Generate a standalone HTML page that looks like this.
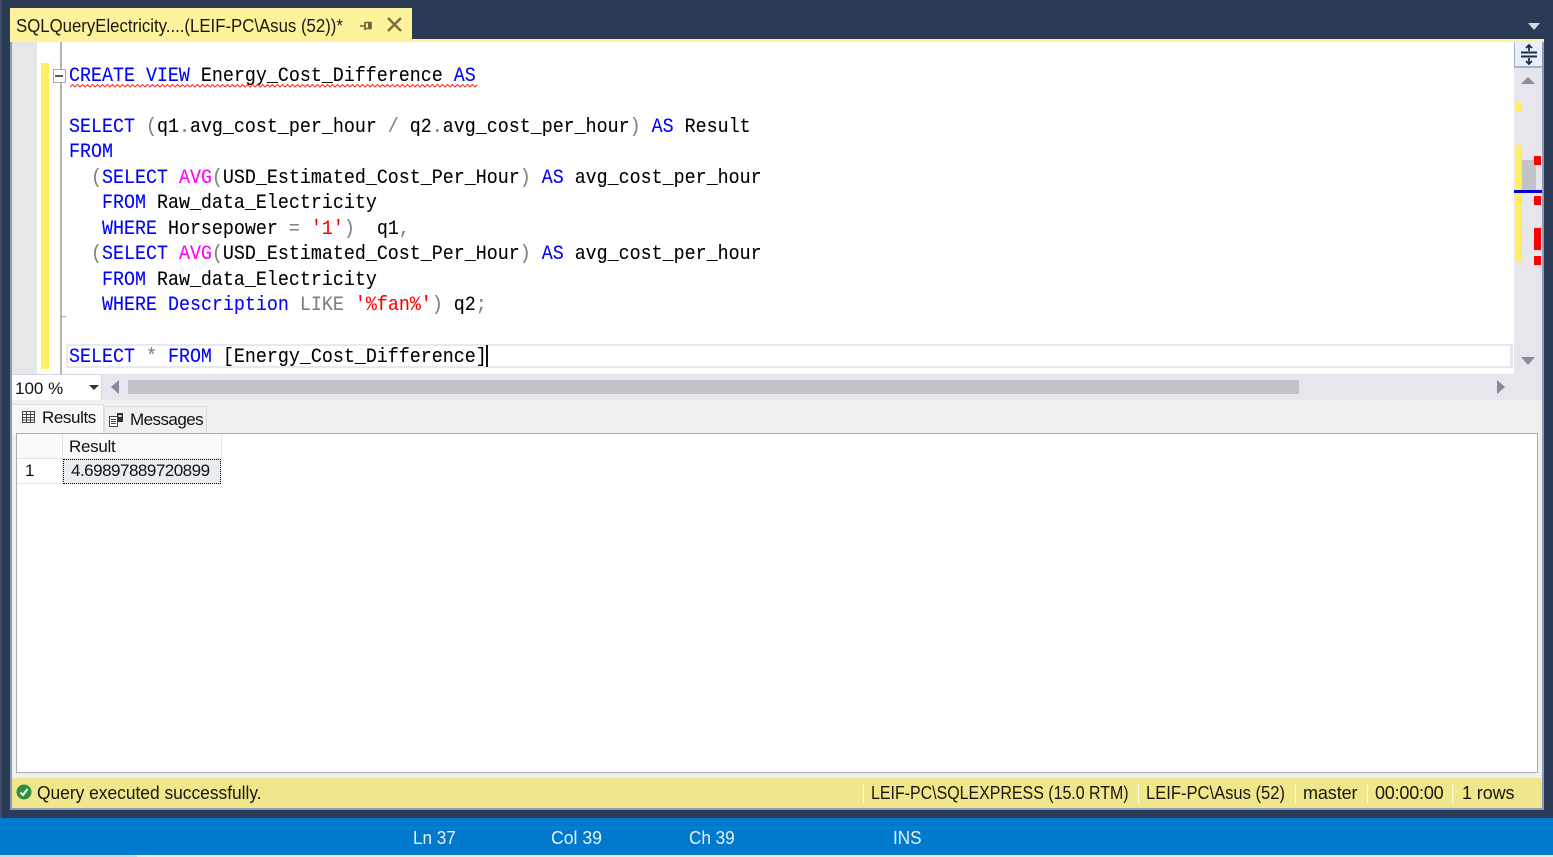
<!DOCTYPE html>
<html><head><meta charset="utf-8">
<style>
html,body{margin:0;padding:0;width:1553px;height:857px;overflow:hidden;background:#2b3a55}
div,span.a{position:absolute}
.t{font-family:"Liberation Sans",sans-serif;white-space:nowrap;color:#111}
.c{position:absolute;left:69px;font-family:"Liberation Mono",monospace;font-size:20.5px;line-height:25px;height:25px;white-space:pre;color:#000;-webkit-text-stroke:.1px currentColor;transform-origin:0 0;transform:scaleX(.8935)}
.k{color:#0000ff}.g{color:#808080}.m{color:#ff00ff}.r{color:#ff0000}
.s{position:absolute;top:782px;font-family:"Liberation Sans",sans-serif;font-size:18px;line-height:22px;white-space:nowrap;color:#1a1a0a;transform-origin:0 50%}
.sep{position:absolute;top:783px;width:1px;height:21px;background:#fbf8dc}
.b{position:absolute;top:827px;font-family:"Liberation Sans",sans-serif;font-size:18px;line-height:22px;color:#e6f2fb;white-space:nowrap;transform-origin:0 50%;transform:scaleX(.95)}
</style></head><body>
<div style="left:0;top:0;width:2px;height:818px;background:#3d4c6b"></div>
<!-- outer frame -->
<div style="left:10px;top:39px;width:1534px;height:771px;background:#8f9bb8"></div>
<div style="left:12px;top:42px;width:1530px;height:766px;background:#f0f0f3"></div>
<!-- tab -->
<div style="left:10px;top:8px;width:402px;height:34px;background:#fff29d"></div>
<div style="left:10px;top:39px;width:1534px;height:3px;background:#fff29d"></div>
<div class="t" style="left:16px;top:14px;font-size:18px;line-height:24px;color:#1a1a0a;transform-origin:0 50%;transform:scaleX(.932)">SQLQueryElectricity....(LEIF-PC\Asus (52))*</div>
<svg style="position:absolute;left:359px;top:19px" width="15" height="14"><path d="M1 7H6M6 3V11M6 3.5H12V9.5H6" fill="none" stroke="#6e6236" stroke-width="1.6"/><rect x="9" y="3" width="3" height="7" fill="#6e6236"/></svg>
<svg style="position:absolute;left:386px;top:16px" width="18" height="17"><path d="M2 2L15 15M15 2L2 15" stroke="#7a6e44" stroke-width="2.4" fill="none"/></svg>
<svg style="position:absolute;left:1527px;top:23px" width="14" height="8"><path d="M1 0H13L7 7Z" fill="#d5d9e2"/></svg>
<!-- editor -->
<div style="left:12px;top:42px;width:25px;height:332px;background:#e6e7e8"></div>
<div style="left:37px;top:42px;width:1477px;height:332px;background:#fff"></div>
<div style="left:41px;top:63px;width:8px;height:306px;background:#ffee62"></div>
<div style="left:60px;top:42px;width:1.5px;height:332px;background:#b4b4b4"></div>
<div style="left:60px;top:316px;width:6px;height:1px;background:#a8a8a8"></div>
<div style="left:53px;top:69px;width:11px;height:12px;background:#fff;border:1px solid #a8a8a8"></div>
<div style="left:55px;top:75px;width:8px;height:1.5px;background:#555"></div>
<div style="left:66px;top:344px;width:1442px;height:20px;border:2px solid #e8e8f2;border-right-width:3px"></div>
<div style="left:486px;top:345px;width:2px;height:22px;background:#111"></div>
<div class="c" style="top:64px"><span class="k">CREATE VIEW</span> Energy_Cost_Difference <span class="k">AS</span></div>
<svg style="position:absolute;left:70px;top:83px" width="410" height="6"><path d="M0 4L2.5 1.5L5 4L7.5 1.5L10 4L12.5 1.5L15 4L17.5 1.5L20 4L22.5 1.5L25 4L27.5 1.5L30 4L32.5 1.5L35 4L37.5 1.5L40 4L42.5 1.5L45 4L47.5 1.5L50 4L52.5 1.5L55 4L57.5 1.5L60 4L62.5 1.5L65 4L67.5 1.5L70 4L72.5 1.5L75 4L77.5 1.5L80 4L82.5 1.5L85 4L87.5 1.5L90 4L92.5 1.5L95 4L97.5 1.5L100 4L102.5 1.5L105 4L107.5 1.5L110 4L112.5 1.5L115 4L117.5 1.5L120 4L122.5 1.5L125 4L127.5 1.5L130 4L132.5 1.5L135 4L137.5 1.5L140 4L142.5 1.5L145 4L147.5 1.5L150 4L152.5 1.5L155 4L157.5 1.5L160 4L162.5 1.5L165 4L167.5 1.5L170 4L172.5 1.5L175 4L177.5 1.5L180 4L182.5 1.5L185 4L187.5 1.5L190 4L192.5 1.5L195 4L197.5 1.5L200 4L202.5 1.5L205 4L207.5 1.5L210 4L212.5 1.5L215 4L217.5 1.5L220 4L222.5 1.5L225 4L227.5 1.5L230 4L232.5 1.5L235 4L237.5 1.5L240 4L242.5 1.5L245 4L247.5 1.5L250 4L252.5 1.5L255 4L257.5 1.5L260 4L262.5 1.5L265 4L267.5 1.5L270 4L272.5 1.5L275 4L277.5 1.5L280 4L282.5 1.5L285 4L287.5 1.5L290 4L292.5 1.5L295 4L297.5 1.5L300 4L302.5 1.5L305 4L307.5 1.5L310 4L312.5 1.5L315 4L317.5 1.5L320 4L322.5 1.5L325 4L327.5 1.5L330 4L332.5 1.5L335 4L337.5 1.5L340 4L342.5 1.5L345 4L347.5 1.5L350 4L352.5 1.5L355 4L357.5 1.5L360 4L362.5 1.5L365 4L367.5 1.5L370 4L372.5 1.5L375 4L377.5 1.5L380 4L382.5 1.5L385 4L387.5 1.5L390 4L392.5 1.5L395 4L397.5 1.5L400 4L402.5 1.5L405 4L407.5 1.5" fill="none" stroke="#ff3030" stroke-width="1.1"/></svg>
<div class="c" style="top:115px"><span class="k">SELECT</span> <span class="g">(</span>q1<span class="g">.</span>avg_cost_per_hour <span class="g">/</span> q2<span class="g">.</span>avg_cost_per_hour<span class="g">)</span> <span class="k">AS</span> Result</div>
<div class="c" style="top:140px"><span class="k">FROM</span></div>
<div class="c" style="top:166px;left:91px"><span class="g">(</span><span class="k">SELECT</span> <span class="m">AVG</span><span class="g">(</span>USD_Estimated_Cost_Per_Hour<span class="g">)</span> <span class="k">AS</span> avg_cost_per_hour</div>
<div class="c" style="top:191px;left:102px"><span class="k">FROM</span> Raw_data_Electricity</div>
<div class="c" style="top:217px;left:102px"><span class="k">WHERE</span> Horsepower <span class="g">=</span> <span class="r">'1'</span><span class="g">)</span>  q1<span class="g">,</span></div>
<div class="c" style="top:242px;left:91px"><span class="g">(</span><span class="k">SELECT</span> <span class="m">AVG</span><span class="g">(</span>USD_Estimated_Cost_Per_Hour<span class="g">)</span> <span class="k">AS</span> avg_cost_per_hour</div>
<div class="c" style="top:268px;left:102px"><span class="k">FROM</span> Raw_data_Electricity</div>
<div class="c" style="top:293px;left:102px"><span class="k">WHERE</span> <span class="k">Description</span> <span class="g">LIKE</span> <span class="r">'%fan%'</span><span class="g">)</span> q2<span class="g">;</span></div>
<div class="c" style="top:345px"><span class="k">SELECT</span> <span class="g">*</span> <span class="k">FROM</span> [Energy_Cost_Difference]</div>
<!-- vertical scrollbar -->
<div style="left:1514px;top:42px;width:28px;height:332px;background:#e6e6ec"></div>
<div style="left:1514px;top:42px;width:27px;height:24px;background:#e8effc;border-left:1px solid #a8b0c4;border-bottom:2px solid #a8b0c4"></div>
<svg style="position:absolute;left:1520px;top:44px" width="18" height="21"><path d="M1 8.5H17M1 12.5H17" stroke="#1f2c44" stroke-width="2"/><path d="M9 1V7M9 14V20" stroke="#1f2c44" stroke-width="1.8"/><path d="M6 4L9 1L12 4M6 17L9 20L12 17" fill="none" stroke="#1f2c44" stroke-width="1.8"/></svg>
<svg style="position:absolute;left:1520px;top:76px" width="16" height="9"><path d="M1 8H15L8 1Z" fill="#868a9c"/></svg>
<div style="left:1516px;top:102px;width:6px;height:9px;background:#ffee62"></div>
<div style="left:1516px;top:146px;width:6px;height:115px;background:#ffee62"></div>
<div style="left:1522px;top:160px;width:14px;height:31px;background:#c2c3c9"></div>
<div style="left:1534px;top:156px;width:7px;height:9px;background:#ff0000"></div>
<div style="left:1514px;top:190px;width:28px;height:3px;background:#0000cd"></div>
<div style="left:1534px;top:196px;width:7px;height:9px;background:#ff0000"></div>
<div style="left:1534px;top:228px;width:7px;height:22px;background:#ff0000"></div>
<div style="left:1534px;top:256px;width:7px;height:9px;background:#ff0000"></div>
<svg style="position:absolute;left:1520px;top:356px" width="16" height="10"><path d="M1 1H15L8 9Z" fill="#868a9c"/></svg>
<!-- zoom + h scroll row -->
<div style="left:12px;top:374px;width:1530px;height:26px;background:#e6e6ec"></div>
<div style="left:12px;top:374px;width:89px;height:25px;background:#fff;border:1px solid #d4d8e6;border-left:0"></div>
<div class="t" style="left:15px;top:379px;font-size:17px;line-height:20px;color:#111">100 %</div>
<svg style="position:absolute;left:89px;top:385px" width="10" height="6"><path d="M0 0H10L5 5Z" fill="#333"/></svg>
<svg style="position:absolute;left:110px;top:380px" width="10" height="15"><path d="M9 0V14L1 7Z" fill="#868a9c"/></svg>
<div style="left:128px;top:380px;width:1171px;height:14px;background:#c2c3c9"></div>
<svg style="position:absolute;left:1496px;top:380px" width="10" height="15"><path d="M1 0V14L9 7Z" fill="#868a9c"/></svg>
<!-- results tabs -->
<div style="left:12px;top:400px;width:1530px;height:33px;background:#f0f0f3"></div>
<div style="left:12px;top:404px;width:91px;height:29px;background:#f8f8f9;border-right:1px solid #dcdcdc;border-top:1px solid #dcdcdc"></div>
<div style="left:104px;top:406px;width:101px;height:27px;background:#f0f0f0;border:1px solid #dcdcdc;border-bottom:0"></div>
<svg style="position:absolute;left:22px;top:411px" width="13" height="12"><rect x=".5" y=".5" width="12" height="11" fill="#fff" stroke="#444"/><path d="M.5 3.5H12.5M.5 6.5H12.5M.5 9H12.5M4.5 .5V11.5M8.5 .5V11.5" stroke="#444"/></svg>
<svg style="position:absolute;left:109px;top:412px" width="15" height="15"><rect x=".5" y="4.5" width="8" height="10" fill="#fff" stroke="#444"/><path d="M2 7.5H7M2 9.5H7M2 11.5H7" stroke="#444"/><rect x="8" y="1" width="6" height="9" fill="#333"/><rect x="9.5" y="3" width="3" height="2" fill="#ddd"/></svg>
<div class="t" style="left:42px;top:408px;font-size:17px;line-height:20px;letter-spacing:-.4px">Results</div>
<div class="t" style="left:130px;top:410px;font-size:17px;line-height:20px;letter-spacing:-.55px">Messages</div>
<!-- grid -->
<div style="left:16px;top:433px;width:1520px;height:338px;background:#fff;border:1px solid #acacac"></div>
<div style="left:17px;top:434px;width:204px;height:24px;background:#fafafa"></div>
<div style="left:17px;top:458px;width:204px;height:1px;background:#e4e4e4"></div>
<div style="left:17px;top:483px;width:46px;height:1px;background:#e4e4e4"></div>
<div style="left:62px;top:434px;width:1px;height:50px;background:#e4e4e4"></div>
<div style="left:221px;top:434px;width:1px;height:24px;background:#e4e4e4"></div>
<div class="t" style="left:69px;top:437px;font-size:17px;line-height:20px;letter-spacing:-.3px">Result</div>
<div class="t" style="left:25px;top:461px;font-size:17px;line-height:20px">1</div>
<div style="left:63px;top:459px;width:156px;height:23px;background:#e8edf1;border:1px dotted #000"></div>
<div class="t" style="left:71px;top:461px;font-size:17px;line-height:20px;letter-spacing:-.5px">4.69897889720899</div>
<!-- status -->
<div style="left:12px;top:778px;width:1530px;height:30px;background:#f0e68c"></div>
<svg style="position:absolute;left:16px;top:784px" width="16" height="16"><circle cx="8" cy="8" r="7.5" fill="#2f8f3f"/><path d="M4.5 8.5L7 11L11.5 5" fill="none" stroke="#fff" stroke-width="2"/></svg>
<div class="s" style="left:37px;transform:scaleX(.965)">Query executed successfully.</div>
<div class="sep" style="left:863px"></div>
<div class="sep" style="left:1138px"></div>
<div class="sep" style="left:1295px"></div>
<div class="sep" style="left:1367px"></div>
<div class="sep" style="left:1452px"></div>
<div class="s" style="left:871px;transform:scaleX(.886)">LEIF-PC\SQLEXPRESS (15.0 RTM)</div>
<div class="s" style="left:1146px;transform:scaleX(.92)">LEIF-PC\Asus (52)</div>
<div class="s" style="left:1303px;letter-spacing:-.1px">master</div>
<div class="s" style="left:1375px;letter-spacing:-.2px">00:00:00</div>
<div class="s" style="left:1462px;letter-spacing:-.1px">1 rows</div>
<!-- blue bar -->
<div style="left:0;top:818px;width:1553px;height:37px;background:#007acc"></div>
<div style="left:0;top:855px;width:137px;height:2px;background:#c8d8e4"></div>
<div style="left:137px;top:855px;width:1416px;height:2px;background:#e8eef2"></div>
<div class="b" style="left:413px">Ln 37</div>
<div class="b" style="left:551px;transform:scaleX(.98)">Col 39</div>
<div class="b" style="left:689px">Ch 39</div>
<div class="b" style="left:893px">INS</div>
</body></html>
